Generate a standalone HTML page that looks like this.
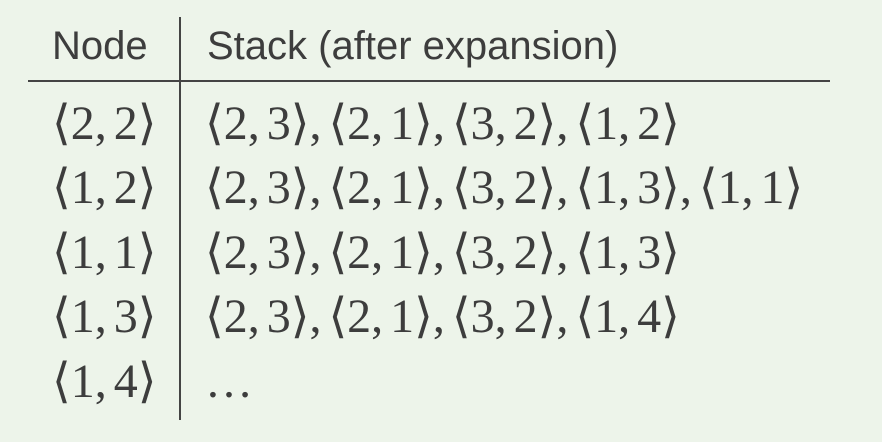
<!DOCTYPE html>
<html><head><meta charset="utf-8"><style>
html,body{margin:0;padding:0}
body{width:882px;height:442px;background:#edf4ea;position:relative;overflow:hidden;color:#3d3d3d}
.v{position:absolute;left:179px;top:17px;width:2px;height:403px;background:#444}
.h{position:absolute;left:28px;top:80px;width:802px;height:2px;background:#444}
.t{position:absolute;white-space:nowrap;line-height:1}
.hd{font-family:"Liberation Sans","DejaVu Sans",sans-serif;font-size:40px}
.m{font-family:"Liberation Serif","DejaVu Serif",serif;font-size:48px;word-spacing:-5px}
</style></head><body>
<div class="v"></div><div class="h"></div>
<div class="t hd" style="left:52px;top:26px">Node</div>
<div class="t hd" style="left:207px;top:26px">Stack (after expansion)</div>

<div class="t m" style="left:52px;top:100px">⟨2, 2⟩</div>
<div class="t m" style="left:205px;top:100px">⟨2, 3⟩, ⟨2, 1⟩, ⟨3, 2⟩, ⟨1, 2⟩</div>
<div class="t m" style="left:52px;top:164px">⟨1, 2⟩</div>
<div class="t m" style="left:205px;top:164px">⟨2, 3⟩, ⟨2, 1⟩, ⟨3, 2⟩, ⟨1, 3⟩, ⟨1, 1⟩</div>
<div class="t m" style="left:52px;top:229px">⟨1, 1⟩</div>
<div class="t m" style="left:205px;top:229px">⟨2, 3⟩, ⟨2, 1⟩, ⟨3, 2⟩, ⟨1, 3⟩</div>
<div class="t m" style="left:52px;top:293px">⟨1, 3⟩</div>
<div class="t m" style="left:205px;top:293px">⟨2, 3⟩, ⟨2, 1⟩, ⟨3, 2⟩, ⟨1, 4⟩</div>
<div class="t m" style="left:52px;top:358px">⟨1, 4⟩</div>
<div class="t m" style="left:205px;top:358px">…</div>
</body></html>
